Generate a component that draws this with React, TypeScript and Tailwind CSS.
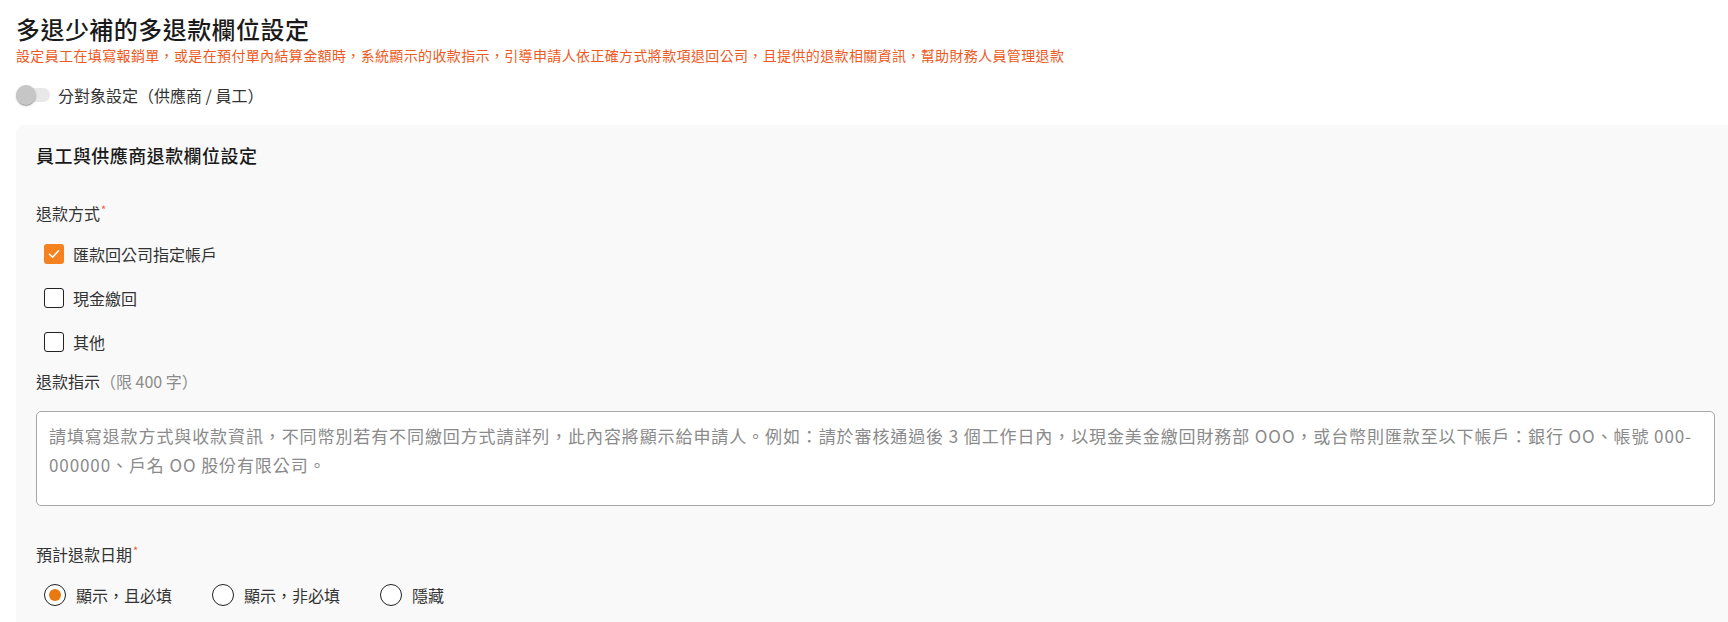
import React from "react";

function Checkbox({ checked, label }: { checked?: boolean; label: string }) {
  return (
    <div className="flex h-[44px] items-center">
      <span className="ml-2 flex items-center gap-[9px]">
        {checked ? (
          <span className="flex h-5 w-5 items-center justify-center rounded-[3px] bg-[#f5821f]">
            <svg width="14" height="14" viewBox="0 0 14 14" fill="none">
              <path d="M2.5 7.2 L5.6 10.2 L11.5 3.8" stroke="#fff" strokeWidth="1.6" strokeLinecap="round" strokeLinejoin="round" />
            </svg>
          </span>
        ) : (
          <span className="h-5 w-5 rounded-[3px] border-[1.5px] border-[#222] bg-white" />
        )}
        <span className="text-[16px] leading-6 text-[#333]">{label}</span>
      </span>
    </div>
  );
}

function Radio({ checked, label }: { checked?: boolean; label: string }) {
  return (
    <span className="flex items-center gap-[10px]">
      <span className="flex h-[22px] w-[22px] items-center justify-center rounded-full border-[1.5px] border-[#222] bg-white">
        {checked && <span className="h-[12px] w-[12px] rounded-full bg-[#e8780f]" />}
      </span>
      <span className="text-[16px] leading-6 text-[#333]">{label}</span>
    </span>
  );
}

function Req() {
  return <span className="relative -top-[6px] ml-[1px] text-[11px] text-[#f05a28]">*</span>;
}

export default function App() {
  return (
    <div className="min-h-screen bg-white pl-4 pt-[13px] font-['Noto_Sans_CJK_TC','Noto_Sans',sans-serif] text-[#333]">
      <h1 className="text-[24px] font-medium leading-[32px] tracking-[0.45px] text-[#1a1a1a]">多退少補的多退款欄位設定</h1>
      <p className="mt-0 text-[14px] leading-5 tracking-[0.36px] text-[#ee5a24]">
        設定員工在填寫報銷單，或是在預付單內結算金額時，系統顯示的收款指示，引導申請人依正確方式將款項退回公司，且提供的退款相關資訊，幫助財務人員管理退款
      </p>

      <div className="mt-[18px] flex h-6 items-center gap-2">
        <span className="relative h-[14px] w-[34px] rounded-full bg-[#e8e8e8]">
          <span className="absolute -top-[3px] left-0 h-5 w-5 rounded-full bg-[#c6c6c6] shadow-[0_2px_1px_-1px_rgba(0,0,0,0.2),0_1px_1px_0_rgba(0,0,0,0.14),0_1px_3px_0_rgba(0,0,0,0.12)]" />
        </span>
        <span className="text-[16px] leading-6 text-[#333]">分對象設定（供應商 / 員工）</span>
      </div>

      <section className="mt-[18px] rounded-l-lg bg-[#f9f9f9] pb-6 pl-5 pr-[13px] pt-4">
        <h2 className="text-[18px] font-medium leading-[29px] tracking-[0.45px] text-[#1a1a1a]">員工與供應商退款欄位設定</h2>

        <div className="mt-[31px] text-[16px] leading-6 text-[#333]">
          退款方式
          <Req />
        </div>
        <div className="mt-[5px]">
          <Checkbox checked label="匯款回公司指定帳戶" />
          <Checkbox label="現金繳回" />
          <Checkbox label="其他" />
        </div>

        <div className="mt-[5px] text-[16px] leading-6 text-[#333]">
          退款指示<span className="text-[#8c8c8c]">（限 400 字）</span>
        </div>
        <textarea
          readOnly
          placeholder={
            "請填寫退款方式與收款資訊，不同幣別若有不同繳回方式請詳列，此內容將顯示給申請人。例如：請於審核通過後 3 個工作日內，以現金美金繳回財務部 OOO，或台幣則匯款至以下帳戶：銀行 OO、帳號 000-\n000000、戶名 OO 股份有限公司。"
          }
          className="mt-[18px] block h-[95px] w-full resize-none rounded-[5px] border border-[#a8a8a8] bg-white pb-3 pl-3 pr-1 pt-[9px] text-[17px] leading-[29px] tracking-[0.9px] text-[#333] outline-none placeholder:text-[#8a8a8a]"
        />

        <div className="mt-[36px] text-[16px] leading-6 text-[#333]">
          預計退款日期
          <Req />
        </div>
        <div className="mt-[5px] flex h-[44px] items-center gap-10 pl-2">
          <Radio checked label="顯示，且必填" />
          <Radio label="顯示，非必填" />
          <Radio label="隱藏" />
        </div>
      </section>
    </div>
  );
}
